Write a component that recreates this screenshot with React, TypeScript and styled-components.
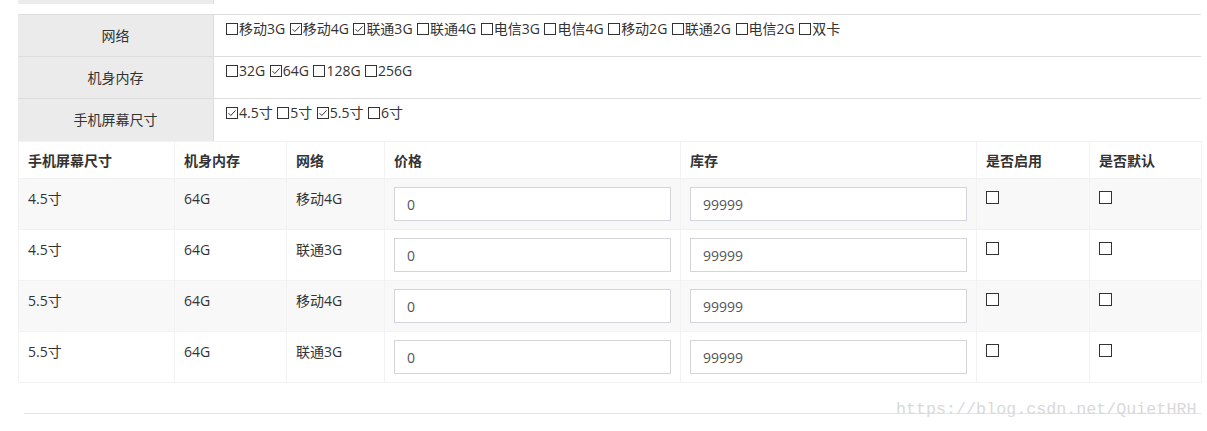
import React from 'react';
import styled, {createGlobalStyle} from 'styled-components';

const GlobalStyle = createGlobalStyle`
  html, body {
    margin: 0;
    padding: 0;
    background: #fff;
  }
  body {
    font-family: "Open Sans", "Noto Sans CJK SC", sans-serif;
    font-size: 14px;
    color: #333;
  }
`;

const Page = styled.div`
  position: relative;
  width: 1207px;
  height: 431px;
  overflow: hidden;
`;

const Content = styled.div`
  width: 1183px;
  margin-left: 18px;
`;

const PrevRow = styled.div`
  display: grid;
  grid-template-columns: 196px 1fr;
  height: 4px;
  margin-bottom: 10px;
`;

const PrevLabel = styled.div`
  background: #ebebeb;
  border-right: 1px solid #ddd;
`;

const SpecTable = styled.div`
  border-top: 1px solid #ddd;
`;

const SpecRow = styled.div`
  display: grid;
  grid-template-columns: 196px 1fr;
  height: 42px;
  border-bottom: 1px solid #ddd;
  box-sizing: border-box;

  &:last-child {
    border-bottom: none;
  }
`;

const SpecLabel = styled.div`
  background: #ebebeb;
  border-right: 1px solid #ddd;
  display: flex;
  align-items: center;
  justify-content: center;
  padding-bottom: 2px;
  box-sizing: border-box;
`;

const SpecValues = styled.div`
  display: flex;
  align-items: flex-start;
  padding: 4px 0 0 12px;
  line-height: 20px;
  white-space: pre;
`;

const Option = styled.label`
  display: inline-flex;
  align-items: center;
  margin-right: 4.5px;
`;

const Box = styled.svg`
  width: 12px;
  height: 12px;
  margin-right: 1px;
  flex: none;
`;

const Grid = styled.table`
  width: 1183px;
  border-collapse: collapse;
  table-layout: fixed;
`;

const Th = styled.th`
  height: 37px;
  padding: 0 9px;
  text-align: left;
  font-weight: bold;
  color: #333;
  border: 1px solid #f2f2f2;
  box-sizing: border-box;
`;

const Tr = styled.tr<{$striped: boolean}>`
  background: ${p => (p.$striped ? '#f8f8f8' : '#fff')};
`;

const Td = styled.td`
  height: 51px;
  padding: 8px 9px;
  vertical-align: top;
  line-height: 20px;
  border: 1px solid #f2f2f2;
  box-sizing: border-box;
`;

const CellText = styled.div`
  padding-top: 2px;
`;

const Input = styled.input`
  width: 100%;
  height: 34px;
  box-sizing: border-box;
  border: 1px solid #d4d4dc;
  padding: 0 12px;
  font-family: "Open Sans", "Noto Sans CJK SC", sans-serif;
  font-size: 14px;
  color: #555;
  background: #fff;
  outline: none;
`;

const CheckCell = styled.div`
  padding-top: 4px;
  display: flex;
`;

const PlainBox = styled.span`
  width: 13px;
  height: 13px;
  box-sizing: border-box;
  border: 1px solid #333;
  background: #fff;
`;

const Footer = styled.div`
  margin: 30px 0 0 6px;
  width: 1177px;
  border-top: 1px solid #e5e5e5;
`;

const Watermark = styled.div`
  position: absolute;
  left: 896px;
  top: 398px;
  font-family: "Liberation Mono", "DejaVu Sans Mono", monospace;
  font-size: 16.7px;
  line-height: 24px;
  color: #d9d9d9;
`;

const CheckBoxIcon: React.FC<{checked?: boolean}> = ({checked}) => (
  <Box viewBox="0 0 12 12">
    <rect x="0.5" y="0.5" width="11" height="11" fill="#fff" stroke="#333" strokeWidth="1" />
    {checked && <path d="M2.5 6.2 L4.8 8.5 L9.6 3.4" fill="none" stroke="#333" strokeWidth="1" />}
  </Box>
);

const specs: {label: string; options: [string, boolean][]}[] = [
  {
    label: '网络',
    options: [
      ['移动3G', false], ['移动4G', true], ['联通3G', true], ['联通4G', false], ['电信3G', false],
      ['电信4G', false], ['移动2G', false], ['联通2G', false], ['电信2G', false], ['双卡', false],
    ],
  },
  {label: '机身内存', options: [['32G', false], ['64G', true], ['128G', false], ['256G', false]]},
  {label: '手机屏幕尺寸', options: [['4.5寸', true], ['5寸', false], ['5.5寸', true], ['6寸', false]]},
];

const rows = [
  ['4.5寸', '64G', '移动4G'],
  ['4.5寸', '64G', '联通3G'],
  ['5.5寸', '64G', '移动4G'],
  ['5.5寸', '64G', '联通3G'],
];

const widths = [156, 112, 98, 296, 296, 113, 112];
const heads = ['手机屏幕尺寸', '机身内存', '网络', '价格', '库存', '是否启用', '是否默认'];

const App: React.FC = () => (
  <Page>
    <GlobalStyle />
    <Content>
      <PrevRow>
        <PrevLabel />
        <div />
      </PrevRow>
      <SpecTable>
        {specs.map(s => (
          <SpecRow key={s.label}>
            <SpecLabel>{s.label}</SpecLabel>
            <SpecValues>
              {s.options.map(([name, checked]) => (
                <Option key={name}>
                  <CheckBoxIcon checked={checked} />
                  {name}
                </Option>
              ))}
            </SpecValues>
          </SpecRow>
        ))}
      </SpecTable>
      <Grid>
        <colgroup>
          {widths.map((w, i) => <col key={i} style={{width: w}} />)}
        </colgroup>
        <thead>
          <tr>
            {heads.map(h => <Th key={h}>{h}</Th>)}
          </tr>
        </thead>
        <tbody>
          {rows.map((r, i) => (
            <Tr key={i} $striped={i % 2 === 0}>
              {r.map((c, j) => (
                <Td key={j}><CellText>{c}</CellText></Td>
              ))}
              <Td><Input defaultValue="0" /></Td>
              <Td><Input defaultValue="99999" /></Td>
              <Td><CheckCell><PlainBox /></CheckCell></Td>
              <Td><CheckCell><PlainBox /></CheckCell></Td>
            </Tr>
          ))}
        </tbody>
      </Grid>
      <Footer />
    </Content>
    <Watermark>https://blog.csdn.net/QuietHRH</Watermark>
  </Page>
);

export default App;
